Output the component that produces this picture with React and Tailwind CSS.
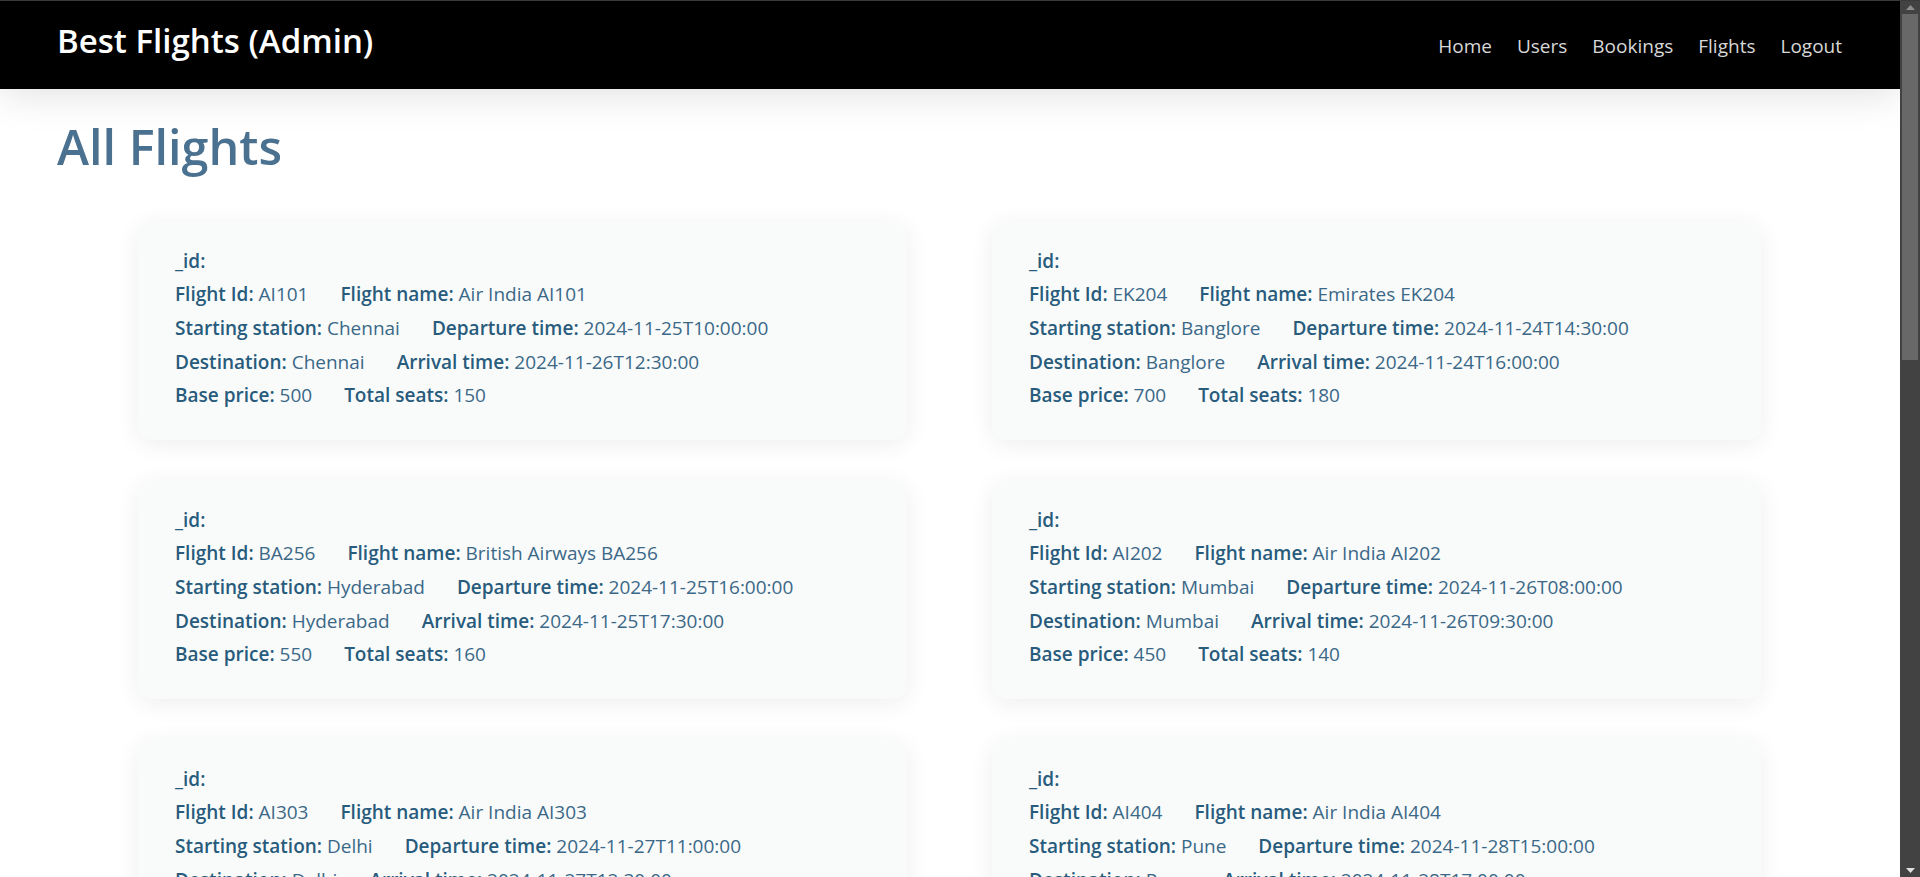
const flights = [
  { id: 'AI101', name: 'Air India AI101', from: 'Chennai', dep: '2024-11-25T10:00:00', to: 'Chennai', arr: '2024-11-26T12:30:00', price: 500, seats: 150 },
  { id: 'EK204', name: 'Emirates EK204', from: 'Banglore', dep: '2024-11-24T14:30:00', to: 'Banglore', arr: '2024-11-24T16:00:00', price: 700, seats: 180 },
  { id: 'BA256', name: 'British Airways BA256', from: 'Hyderabad', dep: '2024-11-25T16:00:00', to: 'Hyderabad', arr: '2024-11-25T17:30:00', price: 550, seats: 160 },
  { id: 'AI202', name: 'Air India AI202', from: 'Mumbai', dep: '2024-11-26T08:00:00', to: 'Mumbai', arr: '2024-11-26T09:30:00', price: 450, seats: 140 },
  { id: 'AI303', name: 'Air India AI303', from: 'Delhi', dep: '2024-11-27T11:00:00', to: 'Delhi', arr: '2024-11-27T12:30:00', price: 600, seats: 170 },
  { id: 'AI404', name: 'Air India AI404', from: 'Pune', dep: '2024-11-28T15:00:00', to: 'Pune', arr: '2024-11-28T17:00:00', price: 650, seats: 150 },
];

function Field({ label, value }) {
  return (
    <span>
      <b className="font-semibold text-[#285b7c]">{label}:</b>{value !== undefined && <span className="text-[#3b6887]"> {value}</span>}
    </span>
  );
}

function FlightCard({ flight }) {
  return (
    <div className="h-[218px] rounded-[14px] bg-[#f9fbfb] px-[37px] pt-[22px] shadow-[0_4px_24px_rgba(0,0,0,0.07)]">
      <div className="flex h-[33.7px] items-center gap-8"><Field label="_id" /></div>
      <div className="flex h-[33.7px] items-center gap-8">
        <Field label="Flight Id" value={flight.id} />
        <Field label="Flight name" value={flight.name} />
      </div>
      <div className="flex h-[33.7px] items-center gap-8">
        <Field label="Starting station" value={flight.from} />
        <Field label="Departure time" value={flight.dep} />
      </div>
      <div className="flex h-[33.7px] items-center gap-8">
        <Field label="Destination" value={flight.to} />
        <Field label="Arrival time" value={flight.arr} />
      </div>
      <div className="flex h-[33.7px] items-center gap-8">
        <Field label="Base price" value={flight.price} />
        <Field label="Total seats" value={flight.seats} />
      </div>
    </div>
  );
}

function Scrollbar() {
  return (
    <div className="flex w-[20px] shrink-0 flex-col bg-[#424242]">
      <div className="flex h-[13px] items-center justify-center">
        <svg width="9" height="5" viewBox="0 0 9 5"><path d="M4.5 0L9 5H0z" fill="#8d8d8d" /></svg>
      </div>
      <div className="mx-[2px] h-[346px] bg-[#686868]" />
      <div className="flex-1" />
      <div className="flex h-[13px] items-center justify-center">
        <svg width="9" height="5" viewBox="0 0 9 5"><path d="M0 0H9L4.5 5z" fill="#e0e0e0" /></svg>
      </div>
    </div>
  );
}

export default function App() {
  return (
    <div className="flex h-screen flex-col border-t border-[#3a3a3a] bg-white font-['Open_Sans',sans-serif]">
      <div className="flex min-h-0 flex-1">
        <div className="min-w-0 flex-1 overflow-hidden">
          <nav className="relative z-10 flex h-[88px] items-center justify-between bg-black pl-[57px] pr-[58px] shadow-[0_4px_40px_rgba(0,0,0,0.13)]">
            <h3 className="-mt-[8px] text-[33px] font-semibold text-white">Best Flights (Admin)</h3>
            <ul className="mt-[2px] flex gap-[25px] text-[19px] text-[#d8d8d8]">
              <li>Home</li>
              <li>Users</li>
              <li>Bookings</li>
              <li>Flights</li>
              <li>Logout</li>
            </ul>
          </nav>
          <main className="bg-white pb-[150px]">
            <h1 className="pl-[57px] pt-[27px] text-[48.5px] leading-[60px] font-semibold text-[#4b7190]">All Flights</h1>
            <div className="mt-[46px] grid grid-cols-[769px_769px] gap-x-[85px] gap-y-[41px] pl-[138px] text-[19px]">
              {flights.map((f) => (
                <FlightCard key={f.id} flight={f} />
              ))}
            </div>
          </main>
        </div>
        <Scrollbar />
      </div>
    </div>
  );
}
